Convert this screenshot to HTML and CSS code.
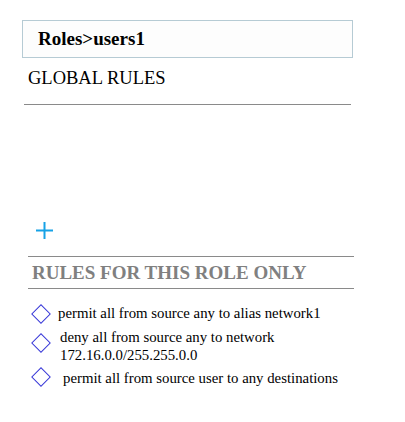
FILE: index.html
```html
<!DOCTYPE html>
<html>
<head>
<meta charset="utf-8">
<link rel="stylesheet" href="styles.css">
</head>
<body>
<div class="page">
  <div class="crumb">Roles&gt;users1</div>
  <div class="global">
    <div class="global-title">GLOBAL RULES</div>
  </div>
  <div class="add">
    <svg width="17" height="17" viewBox="0 0 17 17"><path d="M8.5 0V17M0 8.5H17" stroke="#16a2e6" stroke-width="2"/></svg>
  </div>
  <div class="role">
    <div class="role-title">RULES FOR THIS ROLE ONLY</div>
    <ul class="rules">
      <li class="rule r1"><span class="dia"></span><span class="txt">permit all from source any to alias network1</span></li>
      <li class="rule r2"><span class="dia"></span><span class="txt">deny all from source any to network<br>172.16.0.0/255.255.0.0</span></li>
      <li class="rule r3"><span class="dia"></span><span class="txt">permit all from source user to any destinations</span></li>
    </ul>
  </div>
</div>
</body>
</html>
```
FILE: styles.css
```css
html, body {
  margin: 0;
  padding: 0;
  background: #fff;
}
body {
  font-family: "Liberation Serif", "Times New Roman", serif;
  color: #000;
}
.page {
  padding-top: 20px;
  width: 405px;
}
.crumb {
  margin-left: 22px;
  width: 329px;
  height: 36px;
  border: 1px solid #b6cbd4;
  background: #fdfdfd;
  box-sizing: content-box;
  font-weight: bold;
  font-size: 19px;
  line-height: 36px;
  text-indent: 15px;
}
.global {
  margin-left: 24px;
  width: 327px;
  border-bottom: 1px solid #8a8a8a;
}
.global-title {
  font-size: 18.5px;
  padding-left: 4px;
  padding-top: 9px;
  height: 37px;
  line-height: 22px;
}
.add {
  margin-left: 36px;
  margin-top: 117px;
  height: 17px;
  display: flex;
}
.role {
  margin-left: 28px;
  margin-top: 17px;
}
.role-title {
  width: 326px;
  border-top: 1px solid #8a8a8a;
  border-bottom: 1px solid #8a8a8a;
  color: #808080;
  font-weight: bold;
  font-size: 19px;
  line-height: 22px;
  padding: 5px 0 3px 4px;
  box-sizing: border-box;
  height: 33px;
}
.rules {
  list-style: none;
  margin: 0;
  padding: 0;
  margin-top: 15px;
  font-size: 14.8px;
  line-height: 18px;
}
.rule {
  display: flex;
  align-items: flex-start;
}
.dia {
  flex: none;
  width: 12px;
  height: 12px;
  border: 1px solid #3a3ad8;
  transform: rotate(45deg);
  margin: 3px 0 0 6px;
}
.r1 .txt { margin-left: 10px; }
.r2 { margin-top: 6px; }
.r2 .dia { margin-top: 8px; }
.r2 .txt { margin-left: 12px; }
.r3 { margin-top: 5px; }
.r3 .txt { margin-left: 15px; margin-top: 0; }
.r3 .dia { margin-top: 1px; }
```
